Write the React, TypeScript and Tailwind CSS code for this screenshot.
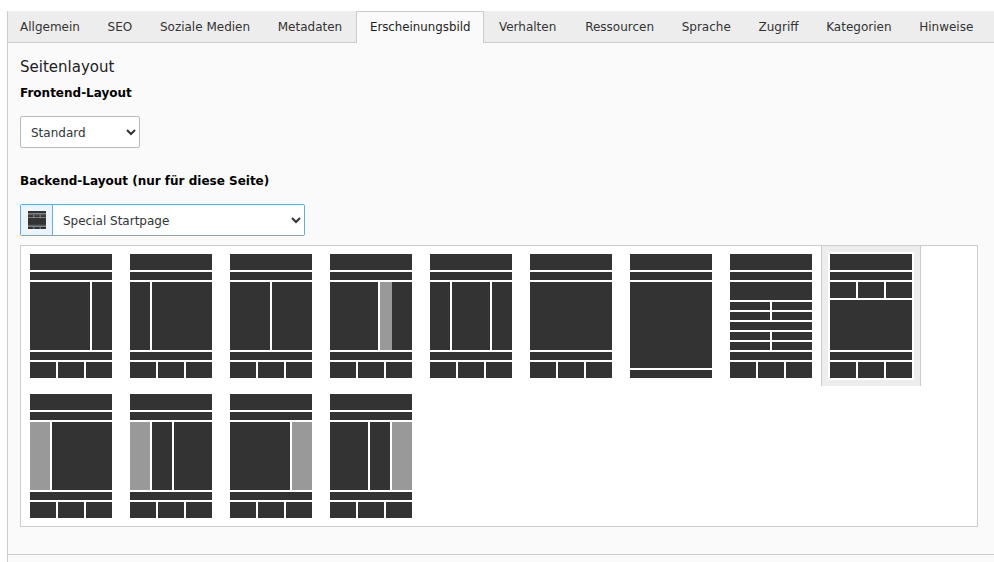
import React from 'react';

const tabs = ['Allgemein', 'SEO', 'Soziale Medien', 'Metadaten', 'Erscheinungsbild', 'Verhalten', 'Ressourcen', 'Sprache', 'Zugriff', 'Kategorien', 'Hinweise'];

// x, y, w, h, grey
type Block = [number, number, number, number, boolean?];

const top: Block[] = [[0, 0, 82, 16], [0, 18, 82, 8]];
const bottom: Block[] = [[0, 98, 82, 8], [0, 108, 26, 16], [28, 108, 26, 16], [56, 108, 26, 16]];

const wrap = (main: Block[]): Block[] => [...top, ...main, ...bottom];

const layouts: Block[][] = [
    wrap([[0, 28, 60, 68], [62, 28, 20, 68]]),
    wrap([[0, 28, 20, 68], [22, 28, 60, 68]]),
    wrap([[0, 28, 40, 68], [42, 28, 40, 68]]),
    wrap([[0, 28, 48, 68], [50, 28, 12, 68, true], [62, 28, 20, 68]]),
    wrap([[0, 28, 20, 68], [22, 28, 38, 68], [62, 28, 20, 68]]),
    wrap([[0, 28, 82, 68]]),
    [...top, [0, 28, 82, 86], [0, 116, 82, 8]],
    [
        ...top,
        [0, 28, 82, 18],
        [0, 48, 40, 8], [42, 48, 40, 8],
        [0, 58, 40, 8], [42, 58, 40, 8],
        [0, 68, 82, 8],
        [0, 78, 40, 8], [42, 78, 40, 8],
        [0, 88, 40, 8], [42, 88, 40, 8],
        ...bottom,
    ],
    [...top, [0, 28, 26, 16], [28, 28, 26, 16], [56, 28, 26, 16], [0, 46, 82, 50], ...bottom],
    wrap([[0, 28, 20, 68, true], [22, 28, 60, 68]]),
    wrap([[0, 28, 20, 68, true], [22, 28, 20, 68], [44, 28, 38, 68]]),
    wrap([[0, 28, 60, 68], [62, 28, 20, 68, true]]),
    wrap([[0, 28, 38, 68], [40, 28, 20, 68], [62, 28, 20, 68, true]]),
];

const Thumb: React.FC<{ blocks: Block[]; size?: number }> = ({ blocks, size }) => (
    <svg
        width={size ?? 82}
        height={size ?? 124}
        viewBox="0 0 82 124"
        preserveAspectRatio="none"
        className="block"
    >
        {blocks.map(([x, y, w, h, grey], i) => (
            <rect key={i} x={x} y={y} width={w} height={h} fill={grey ? '#999999' : '#333333'} />
        ))}
    </svg>
);

const tabClass = (tab: string, i: number) => {
    if (tab === 'Erscheinungsbild') {
        return 'mb-[-1px] flex items-center border-x border-t border-[#cccccc] bg-[#fafafa] px-[12.85px] text-[11.8px] text-[#212121]';
    }
    if (i === 0) return 'flex items-center pl-[12px] pr-[13.85px]';
    if (tab === 'Verhalten') return 'flex items-center pl-[14.6px] pr-[15px]';
    return 'flex items-center px-[13.85px]';
};

export default function App() {
    return (
        <div className="h-[562px] w-[994px] overflow-hidden bg-white pl-[7px] pt-[11px] font-['DejaVu_Sans',Verdana,sans-serif] text-[12px] text-[#333333]">
            <div className="h-full border-l border-[#cccccc] bg-[#fafafa]">
                {/* Tabs */}
                <div className="flex h-[32px] border-b border-[#cccccc] bg-[#ededed]">
                    {tabs.map((tab, i) => (
                        <div key={tab} className={tabClass(tab, i)}>
                            {tab}
                        </div>
                    ))}
                </div>

                <div className="pl-[12px] pr-[16px]">
                    <h4 className="mt-[14px] text-[15px] leading-[20px] text-[#212121]">Seitenlayout</h4>
                    <label className="mt-[8px] block font-bold leading-[16px] text-black">Frontend-Layout</label>
                    <select className="mt-[15px] block h-[32px] w-[120px] rounded-[2px] border border-[#bbbbbb] bg-white pl-[6px] pt-[2px] text-[12px]">
                        <option>Standard</option>
                    </select>

                    <label className="mt-[25px] block font-bold leading-[16px] text-black">Backend-Layout (nur für diese Seite)</label>
                    <div className="mt-[15px] flex h-[32px] w-[285px] overflow-hidden rounded-[2px] border border-[#66aae6]">
                        <div className="flex w-[32px] items-center justify-center border-r border-[#66aae6] bg-[#ebf3fb]">
                            <Thumb blocks={layouts[8]} size={18} />
                        </div>
                        <select className="h-full flex-1 bg-white pl-[6px] pt-[2px] text-[12px] outline-none">
                            <option>Special Startpage</option>
                        </select>
                    </div>

                    {/* Layout picker */}
                    <div className="mt-[9px] flex h-[282px] flex-wrap content-start border border-[#cccccc] bg-white">
                        {layouts.map((blocks, i) =>
                            i === 8 ? (
                                <div key={i} className="h-[140px] w-[100px] border-x border-[#cccccc] bg-[#ededed] px-[6px] pt-[6px]">
                                    <div className="h-[128px] w-[86px] bg-white p-[2px]">
                                        <Thumb blocks={blocks} />
                                    </div>
                                </div>
                            ) : (
                                <div key={i} className="h-[140px] w-[100px] pl-[9px] pt-[8px]">
                                    <Thumb blocks={blocks} />
                                </div>
                            ),
                        )}
                    </div>
                </div>

                <div className="mt-[27px] border-t border-[#cccccc]" />
            </div>
        </div>
    );
}
